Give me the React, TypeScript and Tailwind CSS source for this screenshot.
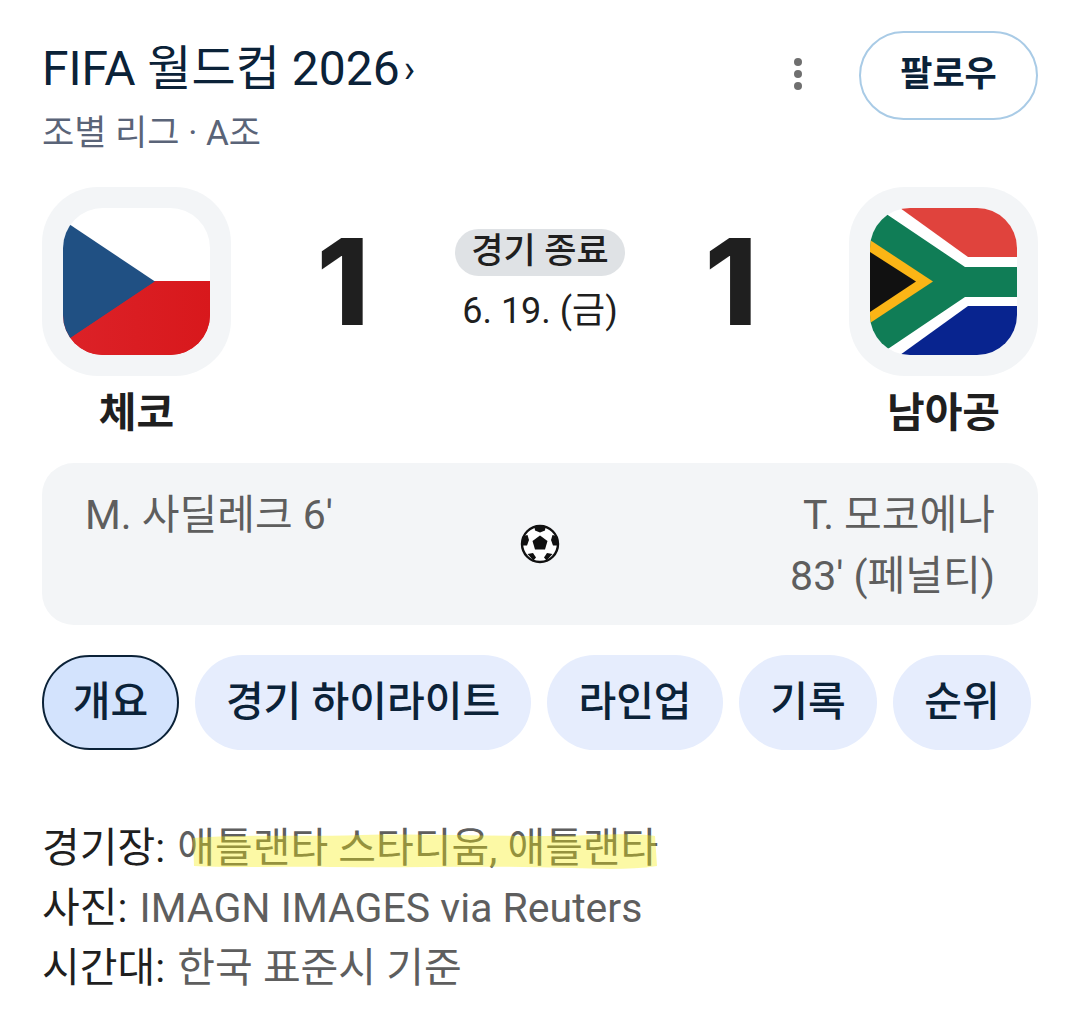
const font = "font-['Roboto','Noto_Sans_CJK_KR',sans-serif]";

function CzechFlag() {
  return (
    <svg width="147" height="147" viewBox="0 0 147 147" className="rounded-[40px]" aria-hidden="true">
      <defs>
        <linearGradient id="czRed" x1="0" y1="0" x2="1" y2="0">
          <stop offset="0" stopColor="#dc2228" />
          <stop offset="1" stopColor="#d8181c" />
        </linearGradient>
      </defs>
      <rect width="147" height="147" fill="#ffffff" />
      <rect y="73" width="147" height="74" fill="url(#czRed)" />
      <path d="M0 12 L92 73.5 L0 135 Z" fill="#205083" />
      <path d="M0 135 L92 73.5 L147 73.5 L147 147 L0 147 Z" fill="url(#czRed)" />
    </svg>
  );
}

function SouthAfricaFlag() {
  return (
    <svg width="147" height="147" viewBox="0 0 147 147" className="rounded-[40px]" aria-hidden="true">
      <rect width="147" height="147" fill="#ffffff" />
      <path d="M30 0 L147 0 L147 49 L98 49 Z" fill="#e0433d" />
      <path d="M30 147 L147 147 L147 98 L98 98 Z" fill="#08248f" />
      <path d="M0 -5 L95 59 L147 59 L147 89 L95 89 L0 153 Z" fill="#107d56" />
      <path d="M0 32 L63 73.5 L0 115 Z" fill="#fbb516" />
      <path d="M0 44 L46 73.5 L0 104 Z" fill="#111111" />
    </svg>
  );
}

function SoccerBall() {
  return (
    <svg width="40" height="40" viewBox="0 0 40 40" aria-hidden="true">
      <circle cx="20" cy="20" r="18" fill="#ffffff" stroke="#111111" strokeWidth="2.4" />
      <path d="M20 11.5 L27.5 17 L25 25.5 L15 25.5 L12.5 17 Z" fill="#111111" />
      <path d="M14.5 3 L25.5 3 L25 6.5 L20 8.5 L15 6.5 Z" fill="#111111" />
      <path d="M3 12 L7.5 11 L9 16 L7 21.5 L2.5 21.5 Z" fill="#111111" />
      <path d="M37 12 L32.5 11 L31 16 L33 21.5 L37.5 21.5 Z" fill="#111111" />
      <path d="M7.5 30 L13 29 L16 33.5 L13.5 36.5 Z" fill="#111111" />
      <path d="M32.5 30 L27 29 L24 33.5 L26.5 36.5 Z" fill="#111111" />
    </svg>
  );
}

function Team({ name, children }: { name: string; children: React.ReactNode }) {
  return (
    <div className="flex flex-col items-center w-[189px]">
      <div className="w-[189px] h-[189px] rounded-[56px] bg-[#f3f5f7] flex items-center justify-center">
        {children}
      </div>
      <span className="mt-[14px] text-[41px] leading-[46px] font-bold text-[#1f1f1f]">{name}</span>
    </div>
  );
}

const tabs = [
  { label: "개요", active: true, w: "w-[137px]" },
  { label: "경기 하이라이트", w: "w-[336px]" },
  { label: "라인업", w: "w-[176px]" },
  { label: "기록", w: "w-[138px]" },
  { label: "순위", w: "w-[138px]" },
];

export default function App() {
  return (
    <div className={`${font} w-[1080px] h-[1034px] bg-white overflow-hidden px-[42px] pt-[31px]`}>
      {/* Header */}
      <div className="flex items-start justify-between">
        <div className="pt-[3px]">
          <div className="flex items-center h-[70px] text-[48px] text-[#0b2238]">
            FIFA 월드컵 2026
            <span className="ml-1 text-[38px]">›</span>
          </div>
          <div className="mt-[6px] text-[35px] leading-[48px] text-[#5a6478]">조별 리그 · A조</div>
        </div>
        <div className="flex items-center">
          <div className="flex flex-col gap-[4px] mr-[57px] -mt-[3px]">
            <span className="w-2 h-2 rounded-full bg-[#6f6f6f]" />
            <span className="w-2 h-2 rounded-full bg-[#6f6f6f]" />
            <span className="w-2 h-2 rounded-full bg-[#6f6f6f]" />
          </div>
          <button className="w-[179px] h-[89px] rounded-full border-2 border-[#a9cbe6] text-[35px] font-bold text-[#0b2238]">
            팔로우
          </button>
        </div>
      </div>

      {/* Score */}
      <div className="flex items-start justify-between mt-[29px]">
        <Team name="체코">
          <CzechFlag />
        </Team>
        <div className="flex items-start h-[189px] mt-[28px] mr-[6px]">
          <span className="font-['Inter'] text-[120px] leading-[134px] font-extrabold text-[#1f1f1f] w-[88px] text-center">1</span>
          <div className="flex flex-col items-center w-[300px] pl-[6px] mt-[14px]">
            <span className="h-[47px] w-[170px] rounded-full bg-[#dfe2e5] flex items-center justify-center text-[35px] font-medium text-[#1f1f1f]">
              경기 종료
            </span>
            <span className="mt-[11px] text-[36px] leading-[48px] text-[#1f1f1f]">6. 19. (금)</span>
          </div>
          <span className="font-['Inter'] text-[120px] leading-[134px] font-extrabold text-[#1f1f1f] w-[88px] text-center">1</span>
        </div>
        <Team name="남아공">
          <SouthAfricaFlag />
        </Team>
      </div>

      {/* Scorers */}
      <div className="mt-[27px] h-[162px] rounded-[32px] bg-[#f3f5f7] px-[43px] pt-[22px] flex justify-between text-[41px] leading-[61px] text-[#5e5e5e]">
        <div className="w-[400px]">M. 사딜레크 6'</div>
        <div className="mt-[39px]">
          <SoccerBall />
        </div>
        <div className="w-[400px] text-right">
          T. 모코에나
          <br />
          83' (페널티)
        </div>
      </div>

      {/* Tabs */}
      <div className="flex gap-[16px] mt-[30px]">
        {tabs.map((t) => (
          <div
            key={t.label}
            className={`${t.w} h-[95px] rounded-full flex items-center justify-center text-[41px] font-medium text-[#0b2238] ${
              t.active ? "bg-[#d3e3fd] border-2 border-[#0b2238]" : "bg-[#e6edfd]"
            }`}
          >
            {t.label}
          </div>
        ))}
      </div>

      {/* Details */}
      <div className="mt-[68px] text-[41px] leading-[60px] text-[#5e5e5e]">
        <div>
          <span className="text-[#1f1f1f] mr-[2px]">경기장: </span>
          <span className="relative">
            애틀랜타 스타디움, 애틀랜타
            {/* marker stroke over the text */}
            <svg
              className="absolute left-[14px] top-[8px] w-[466px] h-[40px]"
              viewBox="0 0 466 40"
              preserveAspectRatio="none"
              aria-hidden="true"
            >
              <path
                d="M2 6 C60 2 110 5 170 3 C250 1 330 6 400 3 C430 2 450 2 464 4 L466 34 C440 38 410 37 380 36 C300 33 220 36 150 35 C90 34 40 36 3 34 Z"
                fill="#f8ed06"
                fillOpacity="0.36"
              />
            </svg>
          </span>
        </div>
        <div>
          <span className="text-[#1f1f1f] mr-[2px]">사진: </span>IMAGN IMAGES via Reuters
        </div>
        <div>
          <span className="text-[#1f1f1f] mr-[2px]">시간대: </span>한국 표준시 기준
        </div>
      </div>
    </div>
  );
}
